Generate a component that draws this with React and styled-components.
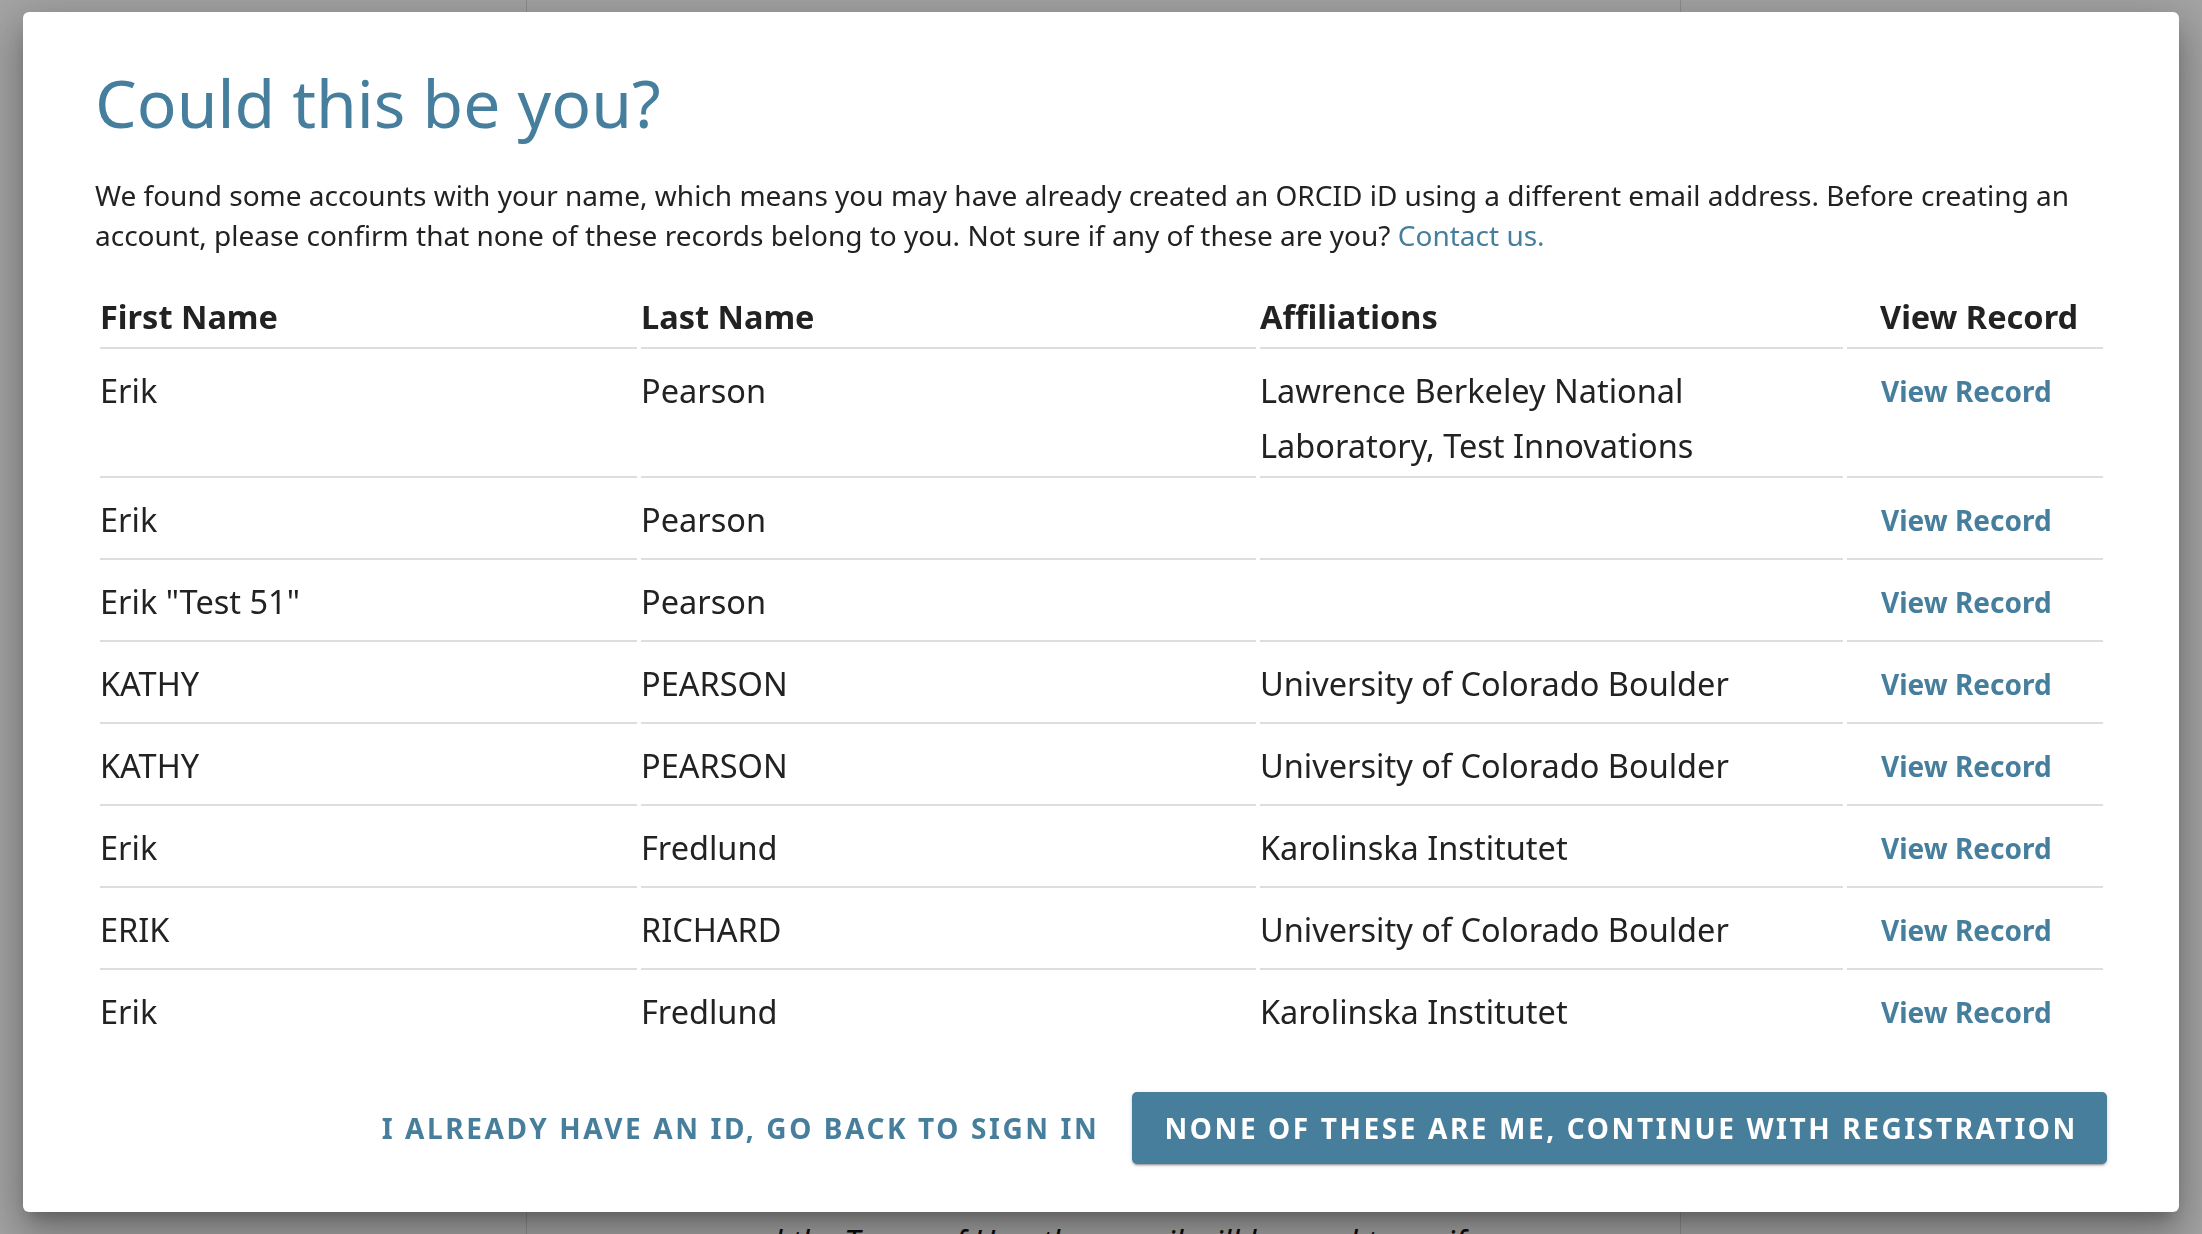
import React from "react";
import styled, { createGlobalStyle } from "styled-components";

const GlobalStyle = createGlobalStyle`
  html, body { margin: 0; padding: 0; }
  body {
    width: 2202px;
    height: 1234px;
    overflow: hidden;
    background: #ffffff;
    font-family: "Noto Sans", "Open Sans", "DejaVu Sans", sans-serif;
    color: #222222;
  }
  * { box-sizing: border-box; }
`;

const Page = styled.div`
  display: flex;
  height: 1234px;
  padding-left: 526px;
`;

const PageColumn = styled.main`
  width: 1155px;
  height: 100%;
  border-left: 1px solid #dedede;
  border-right: 1px solid #dedede;
  display: flex;
  flex-direction: column;
  justify-content: flex-end;
  align-items: center;
  overflow: hidden;
`;

const PageNote = styled.p`
  margin: 0 0 -30px;
  font-size: 32px;
  line-height: 44px;
  font-style: italic;
  color: #111;
  white-space: nowrap;
`;

const Overlay = styled.div`
  position: fixed;
  inset: 0;
  background: rgba(0, 0, 0, 0.36);
  display: flex;
  justify-content: center;
  align-items: flex-start;
  padding-top: 12px;
`;

const Dialog = styled.section`
  width: 2156px;
  background: #ffffff;
  border-radius: 6px;
  padding: 50px 72px 48px 72px;
  box-shadow: 0 11px 15px -7px rgba(0, 0, 0, 0.24),
    0 24px 38px 3px rgba(0, 0, 0, 0.18), 0 9px 46px 8px rgba(0, 0, 0, 0.16);
`;

const Title = styled.h1`
  margin: 0;
  font-size: 66px;
  line-height: 80px;
  font-weight: 400;
  color: #467e9d;
`;

const Intro = styled.p`
  margin: 33px 0 34px;
  font-size: 28px;
  line-height: 40px;
  color: #222;
`;

const Link = styled.a`
  color: #467e9d;
  text-decoration: none;
`;

const Table = styled.table`
  width: calc(100% - 1px);
  margin-left: 1px;
  border-collapse: separate;
  border-spacing: 4px 0;
  table-layout: fixed;
`;

const HeadCell = styled.th`
  text-align: left;
  font-weight: 700;
  font-size: 32.5px;
  line-height: 55px;
  padding: 0 0 3px ${(p) => (p.$record ? "33px" : "0")};
  border-bottom: 2px solid #dddddd;
  color: #222;
`;

const Cell = styled.td`
  vertical-align: top;
  font-size: 32.5px;
  line-height: 55px;
  height: ${(p) => (p.$last ? "80px" : "82px")};
  padding: 14px 0 3px ${(p) => (p.$record ? "34px" : "0")};
  border-bottom: ${(p) => (p.$last ? "none" : "2px solid #dddddd")};
  color: #222;
`;

const RecordLink = styled.a`
  display: block;
  font-size: 28px;
  line-height: 56px;
  font-weight: 700;
  color: #467e9d;
  text-decoration: none;
`;

const Actions = styled.div`
  margin-top: 42px;
  display: flex;
  justify-content: flex-end;
  align-items: center;
  gap: 17px;
`;

const ActionButton = styled.button`
  height: 72px;
  border: none;
  border-radius: 5px;
  font-family: inherit;
  font-size: 28px;
  font-weight: 700;
  letter-spacing: 2.6px;
  text-transform: uppercase;
  cursor: pointer;
  padding: ${(p) => (p.$primary ? "0 29px 0 32px" : "0 16px 0 20px")};
  background: ${(p) => (p.$primary ? "#467e9c" : "transparent")};
  color: ${(p) => (p.$primary ? "#ffffff" : "#467e9c")};
  box-shadow: ${(p) =>
    p.$primary
      ? "0 3px 1px -2px rgba(0,0,0,.2), 0 2px 2px 0 rgba(0,0,0,.14), 0 1px 5px 0 rgba(0,0,0,.12)"
      : "none"};
`;

const rows = [
  { first: "Erik", last: "Pearson", aff: "Lawrence Berkeley National Laboratory, Test Innovations" },
  { first: "Erik", last: "Pearson", aff: "" },
  { first: 'Erik "Test 51"', last: "Pearson", aff: "" },
  { first: "KATHY", last: "PEARSON", aff: "University of Colorado Boulder" },
  { first: "KATHY", last: "PEARSON", aff: "University of Colorado Boulder" },
  { first: "Erik", last: "Fredlund", aff: "Karolinska Institutet" },
  { first: "ERIK", last: "RICHARD", aff: "University of Colorado Boulder" },
  { first: "Erik", last: "Fredlund", aff: "Karolinska Institutet" },
];

export default function App() {
  return (
    <>
      <GlobalStyle />
      <Page>
        <PageColumn>
          <PageNote>and the Terms of Use, the e-mail will be used to verify</PageNote>
        </PageColumn>
      </Page>
      <Overlay>
        <Dialog role="dialog">
          <Title>Could this be you?</Title>
          <Intro>
            We found some accounts with your name, which means you may have already created an
            ORCID iD using a different email address. Before creating an account, please confirm
            that none of these records belong to you. Not sure if any of these are you?{" "}
            <Link href="#">Contact us.</Link>
          </Intro>
          <Table>
            <colgroup>
              <col style={{ width: "537px" }} />
              <col style={{ width: "615px" }} />
              <col style={{ width: "583px" }} />
              <col style={{ width: "256px" }} />
            </colgroup>
            <thead>
              <tr>
                <HeadCell>First Name</HeadCell>
                <HeadCell>Last Name</HeadCell>
                <HeadCell>Affiliations</HeadCell>
                <HeadCell $record>View Record</HeadCell>
              </tr>
            </thead>
            <tbody>
              {rows.map((r, i) => {
                const last = i === rows.length - 1;
                return (
                  <tr key={i}>
                    <Cell $last={last}>{r.first}</Cell>
                    <Cell $last={last}>{r.last}</Cell>
                    <Cell $last={last}>{r.aff}</Cell>
                    <Cell $last={last} $record>
                      <RecordLink href="#">View Record</RecordLink>
                    </Cell>
                  </tr>
                );
              })}
            </tbody>
          </Table>
          <Actions>
            <ActionButton>I already have an iD, go back to sign in</ActionButton>
            <ActionButton $primary>None of these are me, continue with registration</ActionButton>
          </Actions>
        </Dialog>
      </Overlay>
    </>
  );
}
